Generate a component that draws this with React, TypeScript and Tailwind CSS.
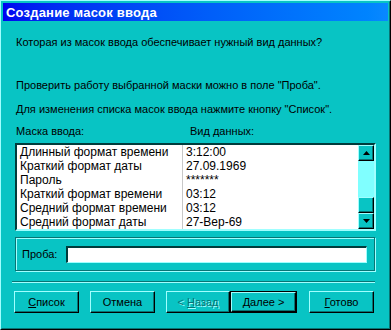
const rows = [
  ["Длинный формат времени", "3:12:00"],
  ["Краткий формат даты", "27.09.1969"],
  ["Пароль", "*******"],
  ["Краткий формат времени", "03:12"],
  ["Средний формат времени", "03:12"],
  ["Средний формат даты", "27-Вер-69"],
];

const raised =
  "border border-t-[#a0ffff] border-l-[#a0ffff] border-r-black border-b-black shadow-[inset_-1px_-1px_0_#087474]";

function Arrow({ up }: { up?: boolean }) {
  return (
    <svg width="7" height="4" viewBox="0 0 7 4">
      <path d={up ? "M3.5 0 L7 4 L0 4 Z" : "M0 0 L7 0 L3.5 4 Z"} fill="black" />
    </svg>
  );
}

export default function App() {
  return (
    <div className="w-[391px] h-[330px] bg-[#08c4c4] font-['Liberation_Sans',Arial,sans-serif] text-black border border-t-[#a0ffff] border-l-[#a0ffff] border-r-black border-b-black">
      <div className="h-full border border-t-[#08c4c4] border-l-[#08c4c4] border-r-[#087474] border-b-[#087474] p-[1px]">
        {/* title bar */}
        <div className="h-[18px] flex items-center pl-[3px] bg-gradient-to-r from-[#0000f0] to-[#0a88ff]">
          <span className="text-white font-bold text-[13px] leading-none tracking-[0.2px]">
            Создание масок ввода
          </span>
        </div>

        <div className="text-[11px] leading-[13px] ml-[13px]">
          <div className="mt-[15px]">Которая из масок ввода обеспечивает нужный вид данных?</div>
          <div className="mt-[30px]">Проверить работу выбранной маски можно в поле "Проба".</div>
          <div className="mt-[11px]">Для изменения списка масок ввода нажмите кнопку "Список".</div>
          <div className="mt-[9px] flex">
            <div className="w-[174px]">Маска ввода:</div>
            <div>Вид данных:</div>
          </div>
        </div>

        {/* list */}
        <div className="mt-[5px] ml-[12px] w-[361px] h-[88px] bg-white flex border-t-2 border-l-2 border-t-[#003c3c] border-l-[#003c3c] border-b-2 border-r-2 border-b-[#a0ffff] border-r-[#a0ffff]">
          <div className="flex-1 text-[12px] leading-[14px]">
            {rows.map(([a, b]) => (
              <div key={a} className="flex h-[14px]">
                <div className="w-[166px] pl-[3px] border-r border-[#c8c8c8]">{a}</div>
                <div className="pl-[3px]">{b}</div>
              </div>
            ))}
          </div>
          <div className="w-[16px] flex flex-col bg-[#80ffff]">
            <div className={`h-[16px] bg-[#08c4c4] flex items-center justify-center ${raised}`}>
              <Arrow up />
            </div>
            <div className="flex-1" />
            <div className={`h-[16px] bg-[#08c4c4] ${raised}`} />
            <div className={`h-[16px] bg-[#08c4c4] flex items-center justify-center ${raised}`}>
              <Arrow />
            </div>
          </div>
        </div>

        {/* Проба group */}
        <div className="mt-[6px] ml-[12px] w-[360px] h-[34px] flex items-center border border-[#087474] shadow-[inset_1px_1px_0_#a0ffff,1px_1px_0_#a0ffff] text-[11px]">
          <div className="w-[50px] pl-[6px]">Проба:</div>
          <div className="w-[301px] h-[17px] bg-white border-t-2 border-l-2 border-t-[#003c3c] border-l-[#003c3c] border-b border-r border-b-[#a0ffff] border-r-[#a0ffff]" />
        </div>

        {/* separator */}
        <div className="mt-[10px] ml-[9px] w-[363px] h-[2px] border-t border-t-[#087474] border-b border-b-[#a0ffff]" />

        {/* buttons */}
        <div className="mt-[8px] ml-[11px] flex text-[11px]">
          <button className={`w-[65px] h-[22px] bg-[#08c4c4] ${raised}`}>
            <span className="underline">С</span>писок
          </button>
          <button className={`ml-[11px] w-[65px] h-[22px] bg-[#08c4c4] ${raised}`}>Отмена</button>
          <button
            className={`ml-[11px] w-[64px] h-[22px] bg-[#08c4c4] text-[#087474] [text-shadow:1px_1px_0_#a0ffff] ${raised}`}
          >
            &lt; <span className="underline">Н</span>азад
          </button>
          <div className="w-[67px] h-[22px] border border-black">
            <button className={`w-full h-full bg-[#08c4c4] ${raised}`}>
              <span className="underline">Д</span>алее &gt;
            </button>
          </div>
          <button className={`ml-[12px] w-[65px] h-[22px] bg-[#08c4c4] ${raised}`}>
            <span className="underline">Г</span>отово
          </button>
        </div>
      </div>
    </div>
  );
}
